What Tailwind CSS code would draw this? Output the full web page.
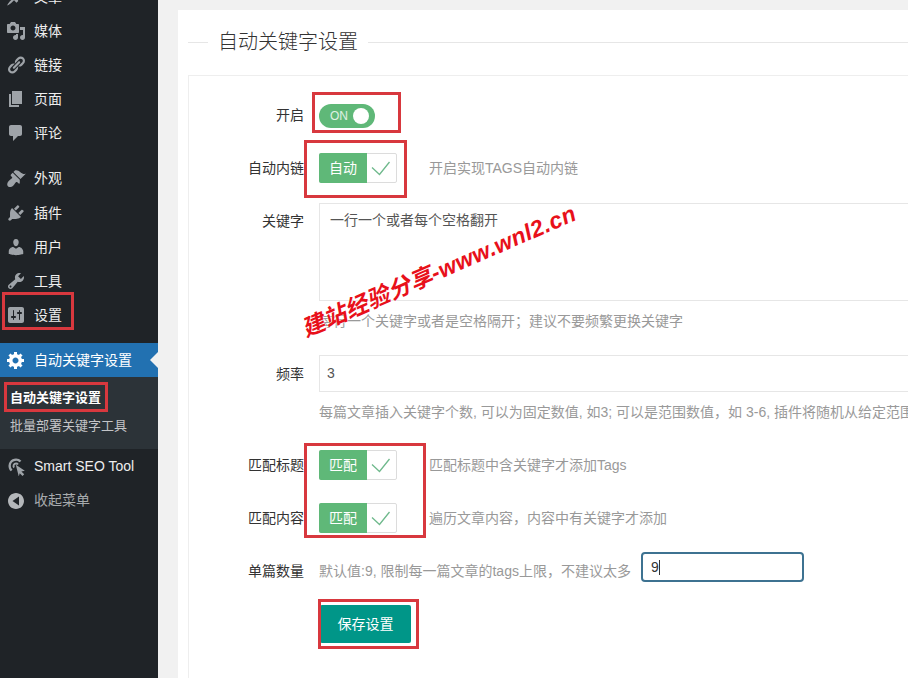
<!DOCTYPE html>
<html lang="zh-CN">
<head>
  <meta charset="UTF-8">
  <title>自动关键字设置</title>
  <script src="https://cdn.jsdelivr.net/npm/@tailwindcss/browser@4"></script>
</head>
<body class="bg-[#f1f1f1] font-['Liberation_Sans','Noto_Sans_CJK_SC',sans-serif] text-[14px]">
<div class="relative w-[908px] h-[678px] overflow-hidden flex">

  <!-- sidebar -->
  <aside class="relative w-[158px] h-full shrink-0 bg-[#1f2327] text-[#eeeeee]">
    <div class="mt-[-20px] flex flex-col">
      <div class="h-[34px] flex items-center"><svg class="w-[20px] h-[20px] ml-[6px] mr-[8px] fill-[#9ea3a8]" viewBox="0 0 20 20"><path d="M10.44 3.02l1.82-1.82 6.36 6.35-1.83 1.82c-1.05-.68-2.48-.57-3.41.36l-.75.75c-.92.93-1.04 2.35-.35 3.41l-1.83 1.82-2.41-2.41-2.8 2.79c-.42.42-3.38 2.71-3.8 2.29s1.86-3.39 2.28-3.81l2.79-2.79L4.1 9.36l1.83-1.82c1.05.69 2.48.57 3.4-.36l.75-.75c.93-.92 1.05-2.35.36-3.41z"/></svg>文章</div>
      <div class="h-[34px] flex items-center"><svg class="w-[20px] h-[20px] ml-[6px] mr-[8px] fill-[#9ea3a8]" viewBox="0 0 20 20"><path d="M13 11V4c0-.55-.45-1-1-1h-1.67L9 1H5L3.67 3H2c-.55 0-1 .45-1 1v7c0 .55.45 1 1 1h10c.55 0 1-.45 1-1zM7 4.5c1.38 0 2.5 1.12 2.5 2.5S8.38 9.5 7 9.5 4.5 8.38 4.5 7 5.62 4.5 7 4.5zM14 6h5v10.5c0 1.38-1.12 2.5-2.5 2.5S14 17.88 14 16.5s1.12-2.5 2.5-2.5c.17 0 .34.02.5.05V9h-3V6zm-4 8.05V13h2v3.5c0 1.38-1.12 2.5-2.5 2.5S7 17.88 7 16.5 8.12 14 9.5 14c.17 0 .34.02.5.05z"/></svg>媒体</div>
      <div class="h-[34px] flex items-center"><svg class="w-[20px] h-[20px] ml-[6px] mr-[8px] fill-[#9ea3a8]" viewBox="0 0 20 20"><path d="M17.74 2.76c1.68 1.69 1.68 4.41 0 6.1l-1.53 1.52c-1.12 1.12-2.7 1.47-4.14 1.09l2.62-2.61.76-.77.76-.76c.84-.84.84-2.2 0-3.04-.84-.85-2.2-.85-3.04 0l-.77.76-3.38 3.38c-.37-1.44-.02-3.02 1.1-4.14l1.52-1.53c1.69-1.68 4.42-1.68 6.1 0zM8.59 13.43l5.34-5.34c.42-.42.42-1.1 0-1.52-.44-.43-1.13-.39-1.53 0l-5.33 5.34c-.42.42-.42 1.1 0 1.52.44.43 1.13.39 1.52 0zm-.76 2.29l4.14-4.15c.38 1.44.03 3.02-1.09 4.14l-1.52 1.53c-1.69 1.68-4.41 1.68-6.1 0-1.68-1.68-1.68-4.42 0-6.1l1.53-1.52c1.12-1.12 2.7-1.47 4.14-1.1l-4.14 4.15c-.85.84-.85 2.2 0 3.05.84.84 2.2.84 3.04 0z"/></svg>链接</div>
      <div class="h-[34px] flex items-center"><svg class="w-[20px] h-[20px] ml-[6px] mr-[8px] fill-[#9ea3a8]" viewBox="0 0 20 20"><path d="M6 15V2h10v13H6zm-1 1h8v2H3V5h2v11z"/></svg>页面</div>
      <div class="h-[34px] flex items-center"><svg class="w-[20px] h-[20px] ml-[6px] mr-[8px] fill-[#9ea3a8]" viewBox="0 0 20 20"><path d="M5 2h9c1.1 0 2 .9 2 2v7c0 1.1-.9 2-2 2h-2l-5 5v-5H5c-1.1 0-2-.9-2-2V4c0-1.1.9-2 2-2z"/></svg>评论</div>
      <div class="h-[11px]"></div>
      <div class="h-[34px] flex items-center"><svg class="w-[20px] h-[20px] ml-[6px] mr-[8px] fill-[#9ea3a8]" viewBox="0 0 20 20"><path d="M14.48 11.06L7.41 3.99l1.5-1.5c.5-.56 2.3-.47 3.51.32 1.21.8 1.43 1.28 2.91 2.1 1.18.64 2.45 1.26 4.45.85zm-.71.71L6.7 4.7 4.93 6.47c-.39.39-.39 1.02 0 1.41l1.06 1.06c.39.39.39 1.03 0 1.42-.6.6-1.43 1.11-2.21 1.69-.35.26-.7.53-1.01.84-1.35 1.35-1.87 3.36-1.38 4.72.19.29.98 1.08 1.27 1.27 1.36.49 3.37-.03 4.72-1.38.31-.31.58-.66.84-1.01.58-.78 1.09-1.61 1.69-2.21.39-.39 1.03-.39 1.42 0l1.06 1.06c.39.39 1.02.39 1.41 0z"/></svg>外观</div>
      <div class="h-[35px] pt-[1px] flex items-center"><svg class="w-[20px] h-[20px] ml-[6px] mr-[8px] fill-[#9ea3a8]" viewBox="0 0 20 20"><path d="M13.11 4.36L9.87 7.6 8 5.73l3.24-3.24c.35-.34 1.05-.2 1.56.32.52.51.66 1.21.31 1.55zm-8 1.77l.91-1.12 9.01 9.01-1.19.84c-.71.71-2.63 1.16-3.82 1.16H6.14L4.9 17.26c-.59.59-1.54.59-2.12 0-.59-.58-.59-1.53 0-2.12l1.24-1.24v-3.88c0-1.13.4-3.19 1.09-3.89zm7.26 3.97l3.24-3.24c.34-.35 1.04-.21 1.55.31.52.51.66 1.21.31 1.55l-3.24 3.25z"/></svg>插件</div>
      <div class="h-[34px] flex items-center"><svg class="w-[20px] h-[20px] ml-[6px] mr-[8px] fill-[#9ea3a8]" viewBox="0 0 20 20"><path d="M10 9.25c-2.27 0-2.73-3.44-2.73-3.44C7 4.02 7.82 2 9.97 2c2.16 0 2.98 2.02 2.71 3.81 0 0-.41 3.44-2.68 3.44zm0 2.57L12.72 10c2.39 0 4.52 2.33 4.52 4.53v2.49s-3.65 1.13-7.24 1.13c-3.65 0-7.24-1.13-7.24-1.13v-2.49c0-2.25 1.94-4.48 4.47-4.48z"/></svg>用户</div>
      <div class="h-[34px] flex items-center"><svg class="w-[20px] h-[20px] ml-[6px] mr-[8px] fill-[#9ea3a8]" viewBox="0 0 20 20"><path d="M16.68 9.77c-1.34 1.34-3.3 1.67-4.95.99l-5.41 6.52c-.99.99-2.59.99-3.58 0s-.99-2.59 0-3.57l6.52-5.42c-.68-1.65-.35-3.61.99-4.95 1.28-1.28 3.12-1.62 4.72-1.06l-2.89 2.89 2.82 2.82 2.86-2.87c.53 1.58.18 3.39-1.08 4.65zM3.81 16.21c.4.39 1.04.39 1.43 0 .4-.4.4-1.04 0-1.43-.39-.4-1.03-.4-1.43 0-.39.39-.39 1.03 0 1.43z"/></svg>工具</div>
      <div class="h-[34px] flex items-center"><svg class="w-[20px] h-[20px] ml-[6px] mr-[8px] fill-[#9ea3a8]" viewBox="0 0 20 20"><path d="M18 16V4c0-1.1-.9-2-2-2H4c-1.1 0-2 .9-2 2v12c0 1.1.9 2 2 2h12c1.1 0 2-.9 2-2zM8 11h1c.55 0 1 .45 1 1s-.45 1-1 1H8v1.5c0 .28-.22.5-.5.5s-.5-.22-.5-.5V13H6c-.55 0-1-.45-1-1s.45-1 1-1h1V5.5c0-.28.22-.5.5-.5s.5.22.5.5V11zm5-2h-1c-.55 0-1-.45-1-1s.45-1 1-1h1V5.5c0-.28.22-.5.5-.5s.5.22.5.5V7h1c.55 0 1 .45 1 1s-.45 1-1 1h-1v5.5c0 .28-.22.5-.5.5s-.5-.22-.5-.5V9z"/></svg>设置</div>
      <div class="h-[11px]"></div>

      <div class="relative h-[34px] flex items-center bg-[#2271b1] text-white"><svg class="w-[20px] h-[20px] ml-[6px] mr-[8px] fill-white" viewBox="0 0 20 20"><path d="M18 12h-2.18c-.17.7-.44 1.35-.81 1.93l1.54 1.54-2.1 2.1-1.54-1.54c-.58.36-1.23.63-1.91.79V19H8v-2.18c-.68-.16-1.33-.43-1.91-.79l-1.54 1.54-2.12-2.12 1.54-1.54c-.36-.58-.63-1.23-.79-1.91H1V9.03h2.17c.16-.7.44-1.35.8-1.94L2.43 5.55l2.1-2.1 1.54 1.54c.58-.37 1.24-.64 1.93-.81V2h3v2.18c.68.16 1.33.43 1.91.79l1.54-1.54 2.12 2.12-1.54 1.54c.36.59.64 1.24.8 1.94H18V12zm-8.5 1.5c1.66 0 3-1.34 3-3s-1.34-3-3-3-3 1.34-3 3 1.34 3 3 3z"/></svg>自动关键字设置
        <span class="absolute right-0 top-[9px] border-y-[8px] border-r-[8px] border-y-transparent border-r-[#f1f1f1]"></span>
      </div>
      <div class="bg-[#2c3338] pt-[7px] pb-[9px] pl-[10px] text-[13px] leading-[28px]">
        <div class="font-bold text-white">自动关键字设置</div>
        <div class="text-[#c3c4c7]">批量部署关键字工具</div>
      </div>

      <div class="h-[34px] flex items-center"><svg class="w-[20px] h-[20px] ml-[6px] mr-[8px] fill-[#9ea3a8]" viewBox="0 0 20 20"><path fill-rule="evenodd" d="M10 2.500a7.500 7.500 0 0 0-7 10.200c.4 1 1 1.900 1.800 2.600l1.700-1.600A5.200 5.200 0 0 1 4.800 10 5.200 5.200 0 0 1 13.500 6.200l1.900-1.500A7.500 7.500 0 0 0 10 2.500z"/><path d="M10 6.500a3.500 3.500 0 0 0-2.600 5.800l1.400-1.400a1.500 1.500 0 0 1 2.400-1.800l1.600-1.200A3.500 3.500 0 0 0 10 6.500z"/><path d="M9.800 8.800l9 6-3.400.7 2.800 2.800-1.700 1.700-2.800-2.800-.9 3.300z"/></svg>Smart SEO Tool</div>
      <div class="h-[35px] flex items-center text-[#a7aaad]"><svg class="w-[20px] h-[20px] ml-[6px] mr-[8px] fill-[#b4b7ba]" viewBox="0 0 20 20"><path d="M18 10c0-4.420-3.580-8-8-8s-8 3.580-8 8 3.580 8 8 8 8-3.580 8-8zm-5 4.500L6.500 10 13 5.500v9z"/></svg>收起菜单</div>
    </div>
  </aside>

  <!-- main -->
  <main class="flex-1 min-w-0 pl-[20px] pt-[10px]">
    <div class="h-full w-[900px] bg-white pl-[10px] pt-[18px] text-[#333333]">
      <div class="flex items-center h-[28px] mb-[19px]">
        <span class="w-[20px] h-px bg-[#e6e6e6]"></span>
        <h2 class="px-[10px] text-[20px] font-light leading-[28px]">自动关键字设置</h2>
        <span class="flex-1 h-px bg-[#e6e6e6]"></span>
      </div>

      <div class="h-[620px] border-l border-t border-[#eeeeee] pt-[28px]">
        <div class="flex items-center gap-[15px]">
          <label class="w-[115px] text-right pb-[2px]">开启</label>
          <div class="w-[56px] h-[24px] rounded-full bg-[#5fb878] flex items-center justify-end pr-[6px] gap-[5px] text-white/80 text-[12px]">ON<span class="w-[16px] h-[16px] rounded-full bg-white"></span></div>
        </div>

        <div class="flex items-center gap-[15px] mt-[25px]">
          <label class="w-[115px] text-right">自动内链</label>
          <div class="w-[78px] h-[30px] flex rounded-[2px] border border-[#dcdcdc]">
            <span class="w-[48px] shrink-0 -my-px -ml-px bg-[#5fb878] text-white rounded-l-[2px] flex items-center justify-center">自动</span>
            <svg class="w-[29px] h-[28px]" viewBox="0 0 29 28" fill="none"><path d="M5 13.500l7.500 7L22.500 8" stroke="#6fb98c" stroke-width="1.300"/></svg>
          </div>
          <span class="ml-[17px] text-[#999999]">开启实现TAGS自动内链</span>
        </div>

        <div class="flex gap-[15px] mt-[20px]">
          <label class="w-[115px] text-right pt-[8px]">关键字</label>
          <div class="w-[620px] h-[98px] border border-[#e6e6e6] px-[10px] py-[6px] text-[#555555]">一行一个或者每个空格翻开</div>
        </div>
        <p class="ml-[130px] mt-[10px] leading-[20px] text-[#999999]">每行一个关键字或者是空格隔开；建议不要频繁更换关键字</p>

        <div class="flex items-center gap-[15px] mt-[24px]">
          <label class="w-[115px] text-right pt-[2px]">频率</label>
          <div class="w-[620px] h-[37px] border border-[#e6e6e6] px-[7px] flex items-center text-[#555555]">3</div>
        </div>
        <p class="ml-[130px] mt-[10px] leading-[20px] text-[#999999] whitespace-nowrap">每篇文章插入关键字个数, 可以为固定数值, 如3; 可以是范围数值，如 3-6, 插件将随机从给定范围内取值</p>

        <div class="flex items-center gap-[15px] mt-[28px]">
          <label class="w-[115px] text-right">匹配标题</label>
          <div class="w-[78px] h-[30px] flex rounded-[2px] border border-[#dcdcdc]">
            <span class="w-[48px] shrink-0 -my-px -ml-px bg-[#5fb878] text-white rounded-l-[2px] flex items-center justify-center">匹配</span>
            <svg class="w-[29px] h-[28px]" viewBox="0 0 29 28" fill="none"><path d="M5 13.500l7.500 7L22.500 8" stroke="#6fb98c" stroke-width="1.300"/></svg>
          </div>
          <span class="ml-[17px] text-[#999999]">匹配标题中含关键字才添加Tags</span>
        </div>

        <div class="flex items-center gap-[15px] mt-[23px]">
          <label class="w-[115px] text-right">匹配内容</label>
          <div class="w-[78px] h-[30px] flex rounded-[2px] border border-[#dcdcdc]">
            <span class="w-[48px] shrink-0 -my-px -ml-px bg-[#5fb878] text-white rounded-l-[2px] flex items-center justify-center">匹配</span>
            <svg class="w-[29px] h-[28px]" viewBox="0 0 29 28" fill="none"><path d="M5 13.500l7.500 7L22.500 8" stroke="#6fb98c" stroke-width="1.300"/></svg>
          </div>
          <span class="ml-[17px] text-[#999999]">遍历文章内容，内容中有关键字才添加</span>
        </div>

        <div class="flex items-center gap-[15px] mt-[19px]">
          <label class="w-[115px] text-right pt-[8px]">单篇数量</label>
          <span class="text-[#999999] w-[307px] whitespace-nowrap pt-[8px]">默认值:9, 限制每一篇文章的tags上限，不建议太多</span>
          <div class="w-[163px] h-[30px] border-2 border-[#3d7291] rounded-[4px] pl-[8px] flex items-center"><span>9</span><span class="w-px h-[15px] bg-[#333333]"></span></div>
        </div>

        <button class="block ml-[131px] mt-[23px] w-[91px] h-[38px] rounded-[2px] bg-[#009688] text-white">保存设置</button>
      </div>
    </div>
  </main>

  <!-- red annotation boxes drawn over the screenshot -->
  <div class="absolute left-[312px] top-[92px] w-[89px] h-[41px] border-[3px] border-[#d8383e]"></div>
  <div class="absolute left-[304px] top-[140px] w-[103px] h-[58px] border-[3px] border-[#d8383e]"></div>
  <div class="absolute left-[2px] top-[292px] w-[72px] h-[38px] border-[3px] border-[#d8383e]"></div>
  <div class="absolute left-[4px] top-[382px] w-[104px] h-[30px] border-[3px] border-[#d8383e]"></div>
  <div class="absolute left-[304px] top-[443px] w-[122px] h-[95px] border-[3px] border-[#d8383e]"></div>
  <div class="absolute left-[318px] top-[599px] w-[101px] h-[50px] border-[3px] border-[#d8383e]"></div>

  <!-- watermark -->
  <div class="absolute left-[303px] top-[313px] origin-left -rotate-[23.5deg] whitespace-nowrap text-[#e8101a] text-[23px] tracking-[0.4px] font-bold italic [text-shadow:0_0_2px_white]">建站经验分享-www.wnl2.cn</div>
</div>
</body>
</html>
